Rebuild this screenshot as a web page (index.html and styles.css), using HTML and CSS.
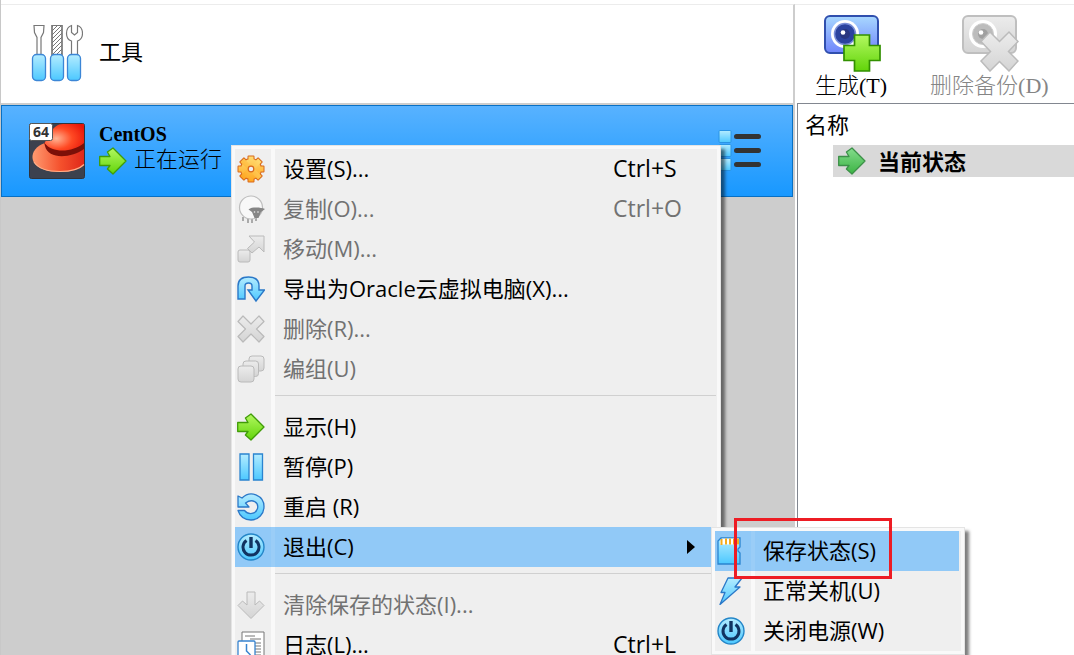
FILE: index.html
```html
<!DOCTYPE html>
<html lang="zh-CN">
<head>
<meta charset="utf-8">
<title>虚拟电脑管理器</title>
<link rel="stylesheet" href="styles.css">
</head>
<body>
<svg class="defs" aria-hidden="true">
  <defs>
    <linearGradient id="blue" x1="0" y1="0" x2="0" y2="1"><stop offset="0" stop-color="#b4ecff"/><stop offset="1" stop-color="#4cc8ff"/></linearGradient>
    <linearGradient id="green" x1="0" y1="0" x2="0" y2="1"><stop offset="0" stop-color="#b2f860"/><stop offset="1" stop-color="#62d40a"/></linearGradient>
    <linearGradient id="teal" x1="0" y1="0" x2="0" y2="1"><stop offset="0" stop-color="#84dc8c"/><stop offset="1" stop-color="#3cb444"/></linearGradient>
    <linearGradient id="gray" x1="0" y1="0" x2="0" y2="1"><stop offset="0" stop-color="#ececec"/><stop offset="1" stop-color="#d4d4d4"/></linearGradient>
    <linearGradient id="camera" x1="0" y1="0" x2="0" y2="1"><stop offset="0" stop-color="#a8d8ff"/><stop offset="1" stop-color="#6f84fb"/></linearGradient>
    <linearGradient id="orange" gradientUnits="userSpaceOnUse" x1="0" y1="0" x2="0" y2="28"><stop offset="0" stop-color="#ffdf75"/><stop offset="1" stop-color="#ffa31c"/></linearGradient>
    <linearGradient id="brim" x1="0" y1="0" x2="1" y2="0"><stop offset="0" stop-color="#ff9a70"/><stop offset=".55" stop-color="#f4502c"/><stop offset="1" stop-color="#e0281a"/></linearGradient>
    <radialGradient id="crown" cx=".3" cy=".55" r=".8"><stop offset="0" stop-color="#ffb494"/><stop offset=".5" stop-color="#ff4a24"/><stop offset="1" stop-color="#e81408"/></radialGradient>
    <pattern id="hatch" width="4" height="4" patternUnits="userSpaceOnUse"><path d="M-1 5 5-1M-1 1 1-1M3 5 5 3" stroke="#777" stroke-width="1"/></pattern>
    <symbol id="arrow" viewBox="0 0 28 28"><path d="M.7 9.500h10.300l-2.600-4.500L14 1l13 13L14 27l-5.600-5 2.600-3.500H.7z" stroke-linejoin="round" stroke-width="1.300"/></symbol>
    <symbol id="cross" viewBox="0 0 28 28"><path d="m6 1 8 8 8-8 5 5.500-7.500 7.500 7.500 7.500-5 5.500-8-8-8 8-5-5.500L8.500 14 1 6.500z" stroke-linejoin="round" stroke-width="1.200"/></symbol>
    <symbol id="power" viewBox="0 0 28 28"><circle cx="14" cy="14" r="13" fill="url(#blue)" stroke="#2486c8" stroke-width="1.400"/><path d="M9.500 7.500a8 8 0 1 0 9 0" fill="none" stroke="#113361" stroke-width="3"/><path d="M14 4v11" stroke="#113361" stroke-width="3.400"/></symbol>
  </defs>
</svg>

<main class="window">
  <section class="machines">
    <button class="tools" type="button">
      <svg class="tools-icon" viewBox="0 0 52 58" aria-hidden="true">
        <g fill="#fff" stroke="#777" stroke-width="1.200">
          <path d="M3 1.500h10l-.5 7-2.500 5V32H6V13.500l-2.500-5z"/>
          <path d="M21 1.500h10V32H21z"/><path d="M21 1.500h10V32H21z" fill="url(#hatch)"/>
          <path d="M40.500 32V17c-3-1-5-4-5-7.500 0-4 2-7 5-8v7l3 2.500 3-2.500v-7c3 1 5 4 5 8 0 3.500-2 6.500-5 7.500v15z"/>
        </g>
        <g fill="url(#blue)" stroke="#3c86d6" stroke-width="1.300">
          <rect x="1.500" y="30.500" width="13" height="26" rx="4"/><rect x="19.500" y="30.500" width="13" height="26" rx="4"/><rect x="36.500" y="30.500" width="13" height="26" rx="4"/>
        </g>
      </svg>
      <span>工具</span>
    </button>
    <article class="machine">
      <svg class="os-icon" viewBox="0 0 56 56" aria-hidden="true">
        <rect x=".5" y=".5" width="55" height="55" rx="2" fill="#3c414e" stroke="#30343d"/>
        <path d="M16 20C7 23 3 29 3.500 35c1 9 13 14 27 14 13 0 21-3 24.500-7V22z" fill="url(#brim)"/>
        <path d="M5 39c4 6 14 9.500 26 9.500 12 0 20-3 24-7" fill="none" stroke="#ffb08a" stroke-width="1.200"/>
        <path d="M15 19c5 8 26 11 40 1v6c-12 9-36 11-39-3z" fill="#7c1008"/>
        <path d="M15.500 20C20 14 23 1 34 1h21v19c-11 9-31 11-39.500 0z" fill="url(#crown)"/>
        <rect x=".5" y=".5" width="23" height="17" rx="2" fill="#fff" stroke="#555"/>
        <text class="badge" x="12" y="14" text-anchor="middle">64</text>
      </svg>
      <div class="machine-text">
        <strong>CentOS</strong>
        <span class="state"><svg class="icon green" aria-hidden="true"><use href="#arrow"/></svg><span>正在运行</span></span>
      </div>
      <button class="details" type="button" aria-label="明细">
        <svg class="details-icon" viewBox="0 0 44 42" aria-hidden="true">
          <g fill="url(#blue)" stroke="#2a94e4"><rect x="1" y=".5" width="12" height="12" rx="1"/><rect x="1" y="14.500" width="12" height="12" rx="1"/><rect x="1" y="28.500" width="12" height="12" rx="1"/></g>
          <path d="M18.500 6.500h22M18.500 20.500h22M18.500 34.500h22" stroke="#333" stroke-width="5" stroke-linecap="round"/>
        </svg>
      </button>
    </article>
  </section>

  <section class="snapshots">
    <div class="toolbar">
      <button type="button">
        <svg class="large-icon" viewBox="0 0 58 58" aria-hidden="true">
          <rect x="2" y="2" width="53" height="37" rx="5" fill="url(#camera)" stroke="#304fae" stroke-width="2"/>
          <circle cx="22" cy="20" r="14" fill="#fff"/><circle cx="22" cy="20" r="10.500" fill="#2b439f" stroke="#788dd8" stroke-width="1.500"/><circle cx="22" cy="20" r="5" fill="#283680"/><circle cx="20" cy="18.500" r="2.300" fill="#fff"/>
          <path d="M31.500 21h15v10.500H57v15H46.500V57h-15V46.500H21v-15h10.500z" fill="url(#green)" stroke="#329000" stroke-width="1.700"/>
        </svg>
        <span>生成(T)</span>
      </button>
      <button type="button" disabled>
        <svg class="large-icon" viewBox="0 0 58 58" aria-hidden="true">
          <rect x="2" y="2" width="53" height="37" rx="5" fill="url(#gray)" stroke="#bfbfbf" stroke-width="2"/>
          <circle cx="22" cy="20" r="14" fill="#fff"/><circle cx="22" cy="20" r="10.500" fill="#bcbcbc" stroke="#d0d0d0"/><circle cx="22" cy="20" r="5" fill="#a0a0a0"/><circle cx="20" cy="18.500" r="2.300" fill="#fff"/>
          <path d="m29 18 9.500 9.500L48 18l9 9.500-9.500 10 9.500 9.500-9 10-9.500-9.500L29 57l-9-10 9.500-9.500L20 27.500z" fill="url(#gray)" stroke="#bbb" stroke-width="1.500"/>
        </svg>
        <span>删除备份(D)</span>
      </button>
    </div>
    <div class="tree">
      <div class="tree-head">名称</div>
      <div class="tree-row"><svg class="icon teal" aria-hidden="true"><use href="#arrow"/></svg><span>当前状态</span></div>
    </div>
  </section>
</main>

<ul class="menu context-menu">
  <li><button type="button"><svg class="icon" viewBox="0 0 28 28" aria-hidden="true">
    <defs><g id="gear"><circle cx="14" cy="14" r="10"/><path d="M11.500 1.500h5v25h-5zM1.500 11.500h25v5h-25z"/><path d="M11.500 1.500h5v25h-5zM1.500 11.500h25v5h-25z" transform="rotate(45 14 14)"/></g></defs>
    <use href="#gear" stroke="#d8681c" stroke-width="2" stroke-linejoin="round"/><use href="#gear" fill="url(#orange)"/><circle cx="14" cy="14" r="2.800" fill="#efefef" stroke="#d8681c" stroke-width="1.200"/></svg><span>设置(S)...</span><kbd>Ctrl+S</kbd></button></li>
  <li><button type="button" disabled><svg class="icon" viewBox="0 0 28 28" aria-hidden="true">
    <path d="M6 22v4M11 23v5M15 23v5M19 22v4" stroke="#aaa" stroke-width="2"/><circle cx="14" cy="12.500" r="11.500" fill="#f8f8f8" stroke="#bdbdbd" stroke-width="1.200"/><path d="M11.500 14.500c2-2 5-2 8-2s6 .5 8.500 1.500l-4 3-2.500 6h-4L15 17z" fill="#858585"/><circle cx="17.500" cy="17" r=".8" fill="#eee"/><circle cx="21" cy="17" r=".8" fill="#eee"/></svg><span>复制(O)...</span><kbd>Ctrl+O</kbd></button></li>
  <li><button type="button" disabled><svg class="icon gray" viewBox="0 0 28 28" aria-hidden="true">
    <rect x="1" y="15" width="12" height="12" rx="2"/><path d="M12 1h15v16l-5-5-7 6-4.500-4.500 7-6.500z"/></svg><span>移动(M)...</span></button></li>
  <li><button type="button"><svg class="icon" viewBox="0 0 28 28" aria-hidden="true">
    <path d="M1 24V11C1 5 5 2 11.500 2S22 5 22 11v4h5.500L19 26l-8-11h4v-4c0-2-1-3-3.500-3S8 9 8 11v13z" fill="url(#blue)" stroke="#2a78c8" stroke-width="1.400"/></svg><span>导出为Oracle云虚拟电脑(X)...</span></button></li>
  <li><button type="button" disabled><svg class="icon gray" aria-hidden="true"><use href="#cross"/></svg><span>删除(R)...</span></button></li>
  <li><button type="button" disabled><svg class="icon gray" viewBox="0 0 28 28" aria-hidden="true">
    <rect x="12" y="1" width="15" height="15" rx="3"/><rect x="6" y="6" width="15.500" height="15.500" rx="3"/><rect x="1" y="11" width="16" height="16" rx="3"/></svg><span>编组(U)</span></button></li>
  <li class="separator" role="separator"></li>
  <li><button type="button"><svg class="icon green" aria-hidden="true"><use href="#arrow"/></svg><span>显示(H)</span></button></li>
  <li><button type="button"><svg class="icon" viewBox="0 0 28 28" aria-hidden="true">
    <path d="M3 1h9v26H3zM16.500 1h9v26h-9z" fill="url(#blue)" stroke="#2a84d0" stroke-width="1.300"/></svg><span>暂停(P)</span></button></li>
  <li><button type="button"><svg class="icon" viewBox="0 0 28 28" aria-hidden="true">
    <path d="M1 3v11h11l-3.500-4c7-5 13.500-.5 12 5.500-1.500 5.500-9 7-13 2H1c2 6 7 9.500 13 9.500 7.500 0 13-6 13-13.500C27 3 14-3.500 5 5z" fill="url(#blue)" stroke="#2a78c8" stroke-width="1.300" stroke-linejoin="round"/></svg><span>重启 (R)</span></button></li>
  <li><button class="active" type="button" aria-haspopup="true" aria-expanded="true"><svg class="icon" aria-hidden="true"><use href="#power"/></svg><span>退出(C)</span><svg class="submenu-mark" viewBox="0 0 8 14" aria-hidden="true"><path d="M0 0v14l8-7z"/></svg></button></li>
  <li class="separator" role="separator"></li>
  <li><button type="button" disabled><svg class="icon gray" viewBox="0 0 28 28" aria-hidden="true">
    <path d="M10 1h8v13l4.500-4 4.500 4.500L14 27.500 1 14.500 5.500 10l4.500 4z"/></svg><span>清除保存的状态(I)...</span></button></li>
  <li><button type="button"><svg class="icon" viewBox="0 0 28 28" aria-hidden="true">
    <path d="M5 1h22v26H5z" fill="#fff" stroke="#777"/><path d="M8 5h10M13 8h11M18 12h6M18 15h6M18 18h6M18 21h6M18 24h6" stroke="#777"/><rect x="1" y="10" width="17" height="17" rx="1" fill="#fff" stroke="#3884cf" stroke-width="1.300"/><path d="M9.500 13v7l4 4" fill="none" stroke="#3884cf" stroke-width="1.500"/></svg><span>日志(L)...</span><kbd>Ctrl+L</kbd></button></li>
</ul>

<ul class="menu submenu">
  <li><button class="active" type="button"><svg class="icon" viewBox="0 0 28 28" aria-hidden="true">
    <path d="M4 1h19v9l-2 2v2l2 2v11H1V4z" fill="url(#blue)" stroke="#2a84d0" stroke-width="1.300"/><path d="M5 1.500h17v6H3V4z" fill="#fff"/><path d="M4.500 2v6M9 1.500v6M13 1.500v6M17 1.500v6M21 1.500v6" stroke="#f5ac1c" stroke-width="2"/></svg><span>保存状态(S)</span></button></li>
  <li><button type="button"><svg class="icon" viewBox="0 0 28 28" aria-hidden="true">
    <path d="M11 1h14l-7 9h5L3 27.500l5-12H4z" fill="url(#blue)" stroke="#2a78c8" stroke-width="1.300" stroke-linejoin="round"/></svg><span>正常关机(U)</span></button></li>
  <li><button type="button"><svg class="icon" aria-hidden="true"><use href="#power"/></svg><span>关闭电源(W)</span></button></li>
</ul>
<div class="callout" aria-hidden="true"></div>
</body>
</html>
```
FILE: styles.css
```css
* { box-sizing: border-box; }

body {
  margin: 0;
  min-height: 100vh;
  overflow: hidden;
  background: #fff;
  color: #000;
  font: 22px/32px "Open Sans", "Noto Sans CJK SC", sans-serif;
}

button {
  margin: 0;
  padding: 0;
  border: 0;
  background: none;
  color: inherit;
  font: inherit;
  text-align: left;
}

svg { display: block; flex: none; }
.defs { position: absolute; width: 0; height: 0; }
.icon { width: 28px; height: 28px; }
.green { fill: url(#green); stroke: #409c08; }
.teal { fill: url(#teal); stroke: #3c9048; }
.gray { fill: url(#gray); stroke: #bababa; stroke-width: 1px; }

.window {
  display: grid;
  grid-template-columns: minmax(0, 1fr) 279px;
  min-height: 100vh;
  padding-top: 4px;
  border-left: 1px solid #c8c8c8;
}

.machines {
  display: flex;
  flex-direction: column;
  border-top: 1px solid #ececec;
  border-right: 2px solid #cdcdcd;
  background: #cdcdcd;
}

.tools {
  display: flex;
  align-items: center;
  gap: 16px;
  height: 98px;
  margin-bottom: 2px;
  padding: 0 0 2px 30px;
  background: #fff;
  font-family: "Liberation Serif", "Noto Sans CJK SC", sans-serif;
}
.tools-icon { width: 52px; height: 58px; }

.machine {
  display: flex;
  align-items: center;
  gap: 14px;
  height: 92px;
  padding: 0 30px 0 27px;
  border: 1px solid #0870c4;
  background: linear-gradient(#58b2ff, #1898ff);
}
.os-icon { width: 56px; height: 56px; }
.badge { font: 700 14px "Open Sans", sans-serif; fill: #333; }
.machine-text {
  flex: 1;
  display: flex;
  flex-direction: column;
  padding-bottom: 6px;
  font-family: "Liberation Serif", "Noto Sans CJK SC", sans-serif;
  line-height: 26px;
}
.machine-text strong { font-size: 20px; }
.state { display: flex; align-items: center; gap: 7px; font-weight: 300; }
.state span { padding-bottom: 2px; }
.details-icon { width: 44px; height: 42px; }

.snapshots {
  display: flex;
  flex-direction: column;
  border-top: 1px solid #ececec;
}
.toolbar {
  display: flex;
  gap: 43px;
  height: 98px;
  padding: 9px 0 0 20px;
  font-family: "Liberation Serif", "Noto Sans CJK SC", sans-serif;
  font-weight: 300;
  white-space: nowrap;
}
.toolbar button {
  display: flex;
  flex-direction: column;
  align-items: center;
  line-height: 28px;
}
.toolbar button:disabled { color: #858585; }
.large-icon { width: 58px; height: 58px; margin-left: 2px; }

.tree {
  flex: 1;
  margin-left: 2px;
  padding-top: 4px;
  border: solid #828790;
  border-width: 1px 0 0 1px;
}
.tree-head { padding-left: 7px; }
.tree-row {
  display: flex;
  align-items: center;
  gap: 12px;
  height: 32px;
  margin: 5px 0 0 35px;
  padding-left: 5px;
  background: #d9d9d9;
  font-weight: 700;
}

.menu {
  position: absolute;
  margin: 0;
  padding: 3px;
  border: 1px solid #e4e4e4;
  list-style: none;
  background: #f9f9f9;
  box-shadow: 4px 4px 3px rgba(0, 0, 0, .5);
}
.context-menu { top: 145px; left: 231px; width: 490px; }
.submenu { top: 527px; left: 711px; width: 254px; }

.menu li { background: linear-gradient(90deg, #efefef 36px, #f9f9f9 36px 40px, #efefef 40px); }
.menu button {
  display: grid;
  grid-template-columns: 28px minmax(0, 1fr) auto;
  align-items: center;
  column-gap: 18px;
  width: 100%;
  height: 40px;
  padding-left: 2px;
  white-space: nowrap;
}
.menu button:disabled { color: #727272; }
.menu .active { background: linear-gradient(90deg, #91c9f7 36px, #9acdf7 36px 40px, #91c9f7 40px); }
.menu span, .menu kbd { padding-bottom: 2px; }
.menu kbd { width: 104px; font: inherit; font-size: 23px; }
.submenu .active { width: calc(100% - 2px); }
.submenu-mark { width: 8px; height: 14px; margin-right: 22px; }
.menu .separator { height: 18px; padding: 6px 1px 0 40px; }
.separator::before { content: ""; display: block; height: 1px; background: #d0d0d0; }

.callout {
  position: absolute;
  top: 518px;
  left: 734px;
  width: 158px;
  height: 61px;
  border: 3px solid #ed1c24;
}
```
